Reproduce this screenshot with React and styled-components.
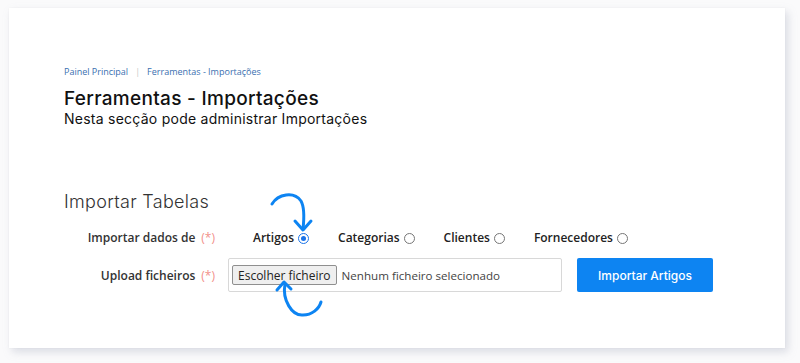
import React from "react";
import styled, { createGlobalStyle } from "styled-components";

const Global = createGlobalStyle`
  html, body { margin: 0; padding: 0; background: #fafafb; }
  body { width: 800px; height: 363px; overflow: hidden; font-family: "Open Sans", "Noto Sans", sans-serif; }
`;

const Page = styled.div`
  padding: 8px 15px 15px 9px;
`;

const Card = styled.div`
  position: relative;
  width: 776px;
  height: 340px;
  box-sizing: border-box;
  background: #fff;
  box-shadow: 3px 4px 8px rgba(160, 165, 185, 0.35), 0 0 2px rgba(0,0,0,0.04);
  padding: 57px 0 0 55px;
`;

const Crumbs = styled.div`
  display: flex;
  align-items: center;
  gap: 7px;
  font-size: 9px;
  color: #3a6fb0;
  height: 12px;
`;

const Sep = styled.span`
  color: #c8c8c8;
`;

const Title = styled.h1`
  margin: 11px 0 0;
  font-family: "Inter", sans-serif;
  font-weight: 500;
  font-size: 19px;
  line-height: 22px;
  color: #111;
  letter-spacing: 0.3px;
`;

const Subtitle = styled.div`
  font-family: "Inter", sans-serif;
  font-weight: 400;
  font-size: 14px;
  line-height: 18px;
  color: #111;
  letter-spacing: 0.25px;
`;

const Section = styled.h2`
  margin: 63px 0 0;
  font-family: "Inter", sans-serif;
  font-weight: 300;
  font-size: 18px;
  line-height: 22px;
  color: #333;
  letter-spacing: 0.3px;
`;

const Row = styled.div`
  display: flex;
  align-items: center;
  height: ${p => p.$h}px;
  margin-top: ${p => p.$mt}px;
`;

const Label = styled.div`
  width: 151px;
  text-align: right;
  font-size: 12px;
  font-weight: 600;
  color: #333;
  box-sizing: border-box;
`;

const Req = styled.span`
  color: #f2908a;
  font-weight: 400;
  margin-left: 6px;
`;

const Options = styled.div`
  display: flex;
  align-items: center;
  gap: 29px;
  margin-left: 38px;
`;

const Option = styled.label`
  display: flex;
  align-items: center;
  gap: 4px;
  font-size: 12px;
  font-weight: 600;
  color: #222;
`;

const Radio = styled.span`
  width: 9px;
  height: 9px;
  border-radius: 50%;
  border: 1px solid ${p => (p.$on ? "#1a73e8" : "#767676")};
  position: relative;
  margin-top: 2px;
  &::after {
    content: "";
    display: ${p => (p.$on ? "block" : "none")};
    position: absolute;
    inset: 2px;
    border-radius: 50%;
    background: #1a73e8;
  }
`;

const FileBox = styled.div`
  margin-left: 13px;
  width: 334px;
  height: 34px;
  box-sizing: border-box;
  border: 1px solid #d8d8d8;
  border-radius: 2px;
  display: flex;
  align-items: center;
  padding-left: 3px;
  gap: 5px;
  font-size: 11.6px;
  color: #444;
`;

const FileButton = styled.span`
  height: 20px;
  box-sizing: border-box;
  padding: 0 5px;
  display: flex;
  align-items: center;
  border: 1px solid #8f8f8f;
  border-radius: 2px;
  background: #efefef;
  color: #222;
  font-size: 12px;
`;

const Submit = styled.button`
  margin-left: 15px;
  width: 136px;
  height: 34px;
  border: none;
  border-radius: 2px;
  background: #0d84f2;
  color: #fff;
  font-family: "Inter", sans-serif;
  font-weight: 500;
  font-size: 12px;
`;

const Arrow = styled.svg`
  position: absolute;
  left: ${p => p.$x}px;
  top: ${p => p.$y}px;
  overflow: visible;
`;

export default function App() {
  return (
    <>
      <Global />
      <Page>
        <Card>
          <Crumbs>
            <span>Painel Principal</span>
            <Sep>|</Sep>
            <span>Ferramentas - Importações</span>
          </Crumbs>
          <Title>Ferramentas - Importações</Title>
          <Subtitle>Nesta secção pode administrar Importações</Subtitle>
          <Section>Importar Tabelas</Section>
          <Row $h={20} $mt={14}>
            <Label>Importar dados de<Req>(*)</Req></Label>
            <Options>
              <Option>Artigos <Radio $on /></Option>
              <Option>Categorias <Radio /></Option>
              <Option>Clientes <Radio /></Option>
              <Option>Fornecedores <Radio /></Option>
            </Options>
          </Row>
          <Row $h={34} $mt={11}>
            <Label>Upload ficheiros<Req>(*)</Req></Label>
            <FileBox>
              <FileButton>Escolher ficheiro</FileButton>
              <span>Nenhum ficheiro selecionado</span>
            </FileBox>
            <Submit>Importar Artigos</Submit>
          </Row>
          <Arrow $x={259} $y={182} width="44" height="42" viewBox="0 0 44 42">
            <path d="M4 14 C 10 4, 26 1, 33 11 C 37 18, 36 30, 35 39" fill="none" stroke="#0d84f2" strokeWidth="3" strokeLinecap="round" />
            <path d="M27 31 L35 40 L43 31" fill="none" stroke="#0d84f2" strokeWidth="3" strokeLinecap="round" strokeLinejoin="round" />
          </Arrow>
          <Arrow $x={268} $y={273} width="46" height="38" viewBox="0 0 46 38">
            <path d="M8 3 C 5 19, 15 35, 26 34 C 35 34, 42 28, 44 21" fill="none" stroke="#0d84f2" strokeWidth="3" strokeLinecap="round" />
            <path d="M0 9 L7 1 L14 8" fill="none" stroke="#0d84f2" strokeWidth="3" strokeLinecap="round" strokeLinejoin="round" />
          </Arrow>
        </Card>
      </Page>
    </>
  );
}
